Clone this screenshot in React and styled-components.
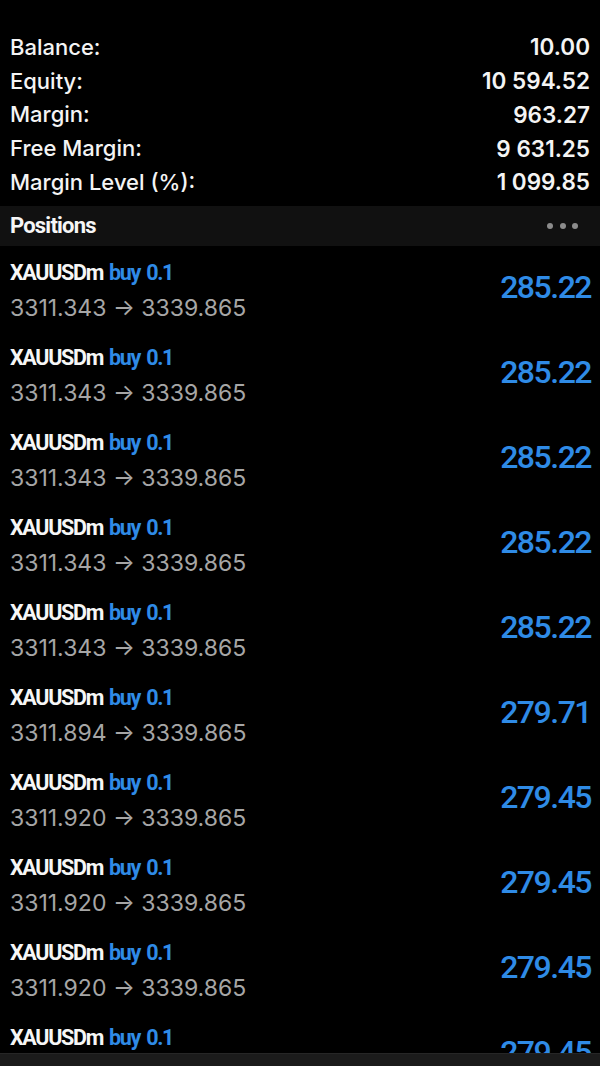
import React from "react";
import styled, { createGlobalStyle } from "styled-components";

const Global = createGlobalStyle`
  html, body { margin: 0; padding: 0; background: #000; }
  body { font-family: Inter, "Noto Sans", sans-serif; color: #f4f4f4; }
  * { box-sizing: border-box; }
`;

const Screen = styled.div`
  height: 1066px;
  display: flex;
  flex-direction: column;
  background: #000;
  overflow: hidden;
`;

const TitleBar = styled.div`
  height: 3px;
  flex-shrink: 0;
  overflow: hidden;
  display: flex;
  justify-content: center;
`;

const TitleText = styled.div`
  font-family: Inter, sans-serif;
  font-weight: 600;
  font-size: 22px;
  line-height: 22px;
  margin-top: -19px;
  color: #2f5a90;
`;

const Content = styled.div`
  flex: 1;
  min-height: 0;
  overflow: hidden;
  display: flex;
  flex-direction: column;
`;

const Info = styled.div`
  flex-shrink: 0;
  padding: 27px 10px 7px 10px;
  display: flex;
  flex-direction: column;
`;

const InfoRow = styled.div`
  height: 33.75px;
  display: flex;
  align-items: center;
  justify-content: space-between;
  font-size: 22px;
  font-weight: 500;
  color: #f4f4f4;
`;

const Label = styled.span``;
const Value = styled.span`
  font-weight: 600;
  font-size: 22.5px;
`;

const SectionHeader = styled.div`
  height: 40px;
  flex-shrink: 0;
  background: #111111;
  display: flex;
  align-items: center;
  justify-content: space-between;
  padding: 0 22px 0 10px;
`;

const SectionTitle = styled.span`
  font-family: Roboto, sans-serif;
  font-weight: 700;
  font-size: 22px;
  letter-spacing: -0.8px;
  color: #f6f6f6;
`;

const Dots = styled.div`
  display: flex;
  gap: 6.5px;
`;

const Dot = styled.span`
  width: 6px;
  height: 6px;
  border-radius: 50%;
  background: #8c8c8c;
`;

const Position = styled.div`
  height: 85px;
  flex-shrink: 0;
  display: flex;
  align-items: center;
  justify-content: space-between;
  padding: 0 10px;
`;

const Lines = styled.div`
  display: flex;
  flex-direction: column;
  gap: 5px;
  margin-top: 5px;
`;

const SymbolLine = styled.div`
  font-family: Roboto, sans-serif;
  font-weight: 700;
  font-size: 21.5px;
  line-height: 30px;
  letter-spacing: -1.3px;
  word-spacing: 2px;
  color: #f6f6f6;
`;

const Side = styled.span`
  color: #2f8be6;
`;

const PriceLine = styled.div`
  font-family: Inter, sans-serif;
  font-weight: 400;
  font-size: 23px;
  line-height: 30px;
  color: #a6a6a6;
`;

const Profit = styled.div`
  font-family: Roboto, sans-serif;
  font-weight: 500;
  font-size: 32px;
  letter-spacing: -1.5px;
  color: #2f8be6;
  margin-right: -1px;
  margin-top: -2px;
`;

const TabBar = styled.div`
  height: 13px;
  flex-shrink: 0;
  background: #1b1b1b;
  border-top: 1px solid #262626;
`;

const info = [
  ["Balance:", "10.00"],
  ["Equity:", "10 594.52"],
  ["Margin:", "963.27"],
  ["Free Margin:", "9 631.25"],
  ["Margin Level (%):", "1 099.85"],
];

const positions = [
  ["3311.343", "285.22"],
  ["3311.343", "285.22"],
  ["3311.343", "285.22"],
  ["3311.343", "285.22"],
  ["3311.343", "285.22"],
  ["3311.894", "279.71"],
  ["3311.920", "279.45"],
  ["3311.920", "279.45"],
  ["3311.920", "279.45"],
  ["3311.920", "279.45"],
];

export default function App() {
  return (
    <Screen>
      <Global />
      <TitleBar>
        <TitleText>10 594.52 USD</TitleText>
      </TitleBar>
      <Content>
        <Info>
          {info.map(([l, v]) => (
            <InfoRow key={l}>
              <Label>{l}</Label>
              <Value>{v}</Value>
            </InfoRow>
          ))}
        </Info>
        <SectionHeader>
          <SectionTitle>Positions</SectionTitle>
          <Dots>
            <Dot />
            <Dot />
            <Dot />
          </Dots>
        </SectionHeader>
        {positions.map(([open, profit], i) => (
          <Position key={i}>
            <Lines>
              <SymbolLine>
                XAUUSDm <Side>buy 0.1</Side>
              </SymbolLine>
              <PriceLine>{open} → 3339.865</PriceLine>
            </Lines>
            <Profit>{profit}</Profit>
          </Position>
        ))}
      </Content>
      <TabBar />
    </Screen>
  );
}
